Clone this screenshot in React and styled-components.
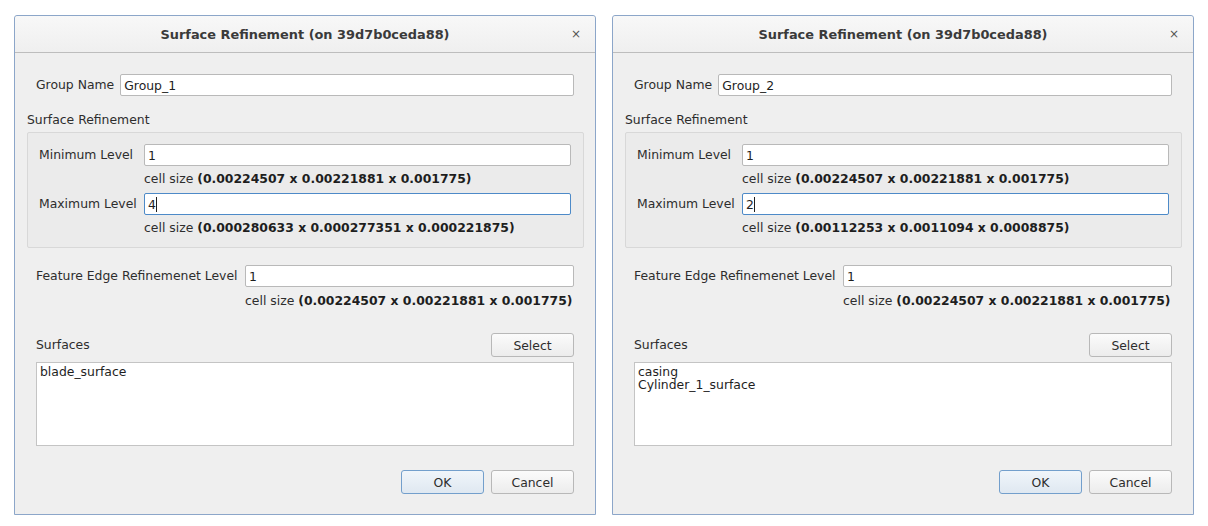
import React from 'react'
import styled, { createGlobalStyle } from 'styled-components'

const GlobalStyle = createGlobalStyle`
  html, body {
    margin: 0;
    padding: 0;
    background: #ffffff;
  }
  body {
    font-family: "DejaVu Sans", "Liberation Sans", sans-serif;
    font-size: 12.4px;
    color: #2d2d2d;
  }
`

const Page = styled.div`
  display: flex;
  gap: 16px;
  padding: 15px 0 0 14px;
`

const Dialog = styled.div`
  box-sizing: border-box;
  width: 582px;
  height: 500px;
  border: 1px solid #8ca6c9;
  border-radius: 3px 3px 0 0;
  background: #efefef;
  display: flex;
  flex-direction: column;
`

const TitleBar = styled.div`
  position: relative;
  height: 36px;
  border-bottom: 1px solid #bdbdbd;
  background: linear-gradient(#f8f8f8, #efefef);
  display: flex;
  align-items: center;
  justify-content: center;
  border-radius: 3px 3px 0 0;
`

const Title = styled.div`
  font-weight: bold;
  font-size: 12.9px;
  color: #3a3a3a;
  margin-top: 1px;
`

const Close = styled.div`
  position: absolute;
  right: 14px;
  top: 11px;
  font-size: 12px;
  color: #555;
`

const Body = styled.div`
  flex: 1;
  display: flex;
  flex-direction: column;
  padding: 21px 11px 0 12px;
`

const Indent = styled.div`
  margin: ${p => p.$top || 0}px 10px 0 9px;
`

const Row = styled.div`
  display: flex;
  align-items: center;
  gap: ${p => p.$gap || 7}px;
`

const FormGrid = styled.div`
  display: grid;
  grid-template-columns: ${p => p.$label}px 1fr;
  align-items: center;
`

const Label = styled.div`
  white-space: nowrap;
  line-height: 16px;
`

const SectionLabel = styled(Label)`
  margin-top: 16px;
`

const Field = styled.div`
  box-sizing: border-box;
  flex: 1;
  height: 22px;
  background: #fff;
  border: 1px solid ${p => (p.$focus ? '#4d8ac8' : '#b9b9b9')};
  border-radius: 2px;
  padding: 0 3px;
  display: flex;
  align-items: center;
  color: #1e1e1e;
`

const Caret = styled.span`
  display: inline-block;
  width: 1px;
  height: 15px;
  background: #1e1e1e;
`

const CellSize = styled.div`
  line-height: 16px;
  white-space: nowrap;
  margin-top: ${p => p.$top || 5}px;
  margin-bottom: ${p => p.$bottom || 0}px;
  b {
    color: #1e1e1e;
  }
`

const GroupBox = styled.div`
  margin-top: 4px;
  border: 1px solid #d8d8d8;
  border-radius: 2px;
  background: #ebebeb;
  padding: 11px 12px 11px 11px;
`

const Button = styled.button`
  box-sizing: border-box;
  width: 83px;
  height: 24px;
  font-family: "DejaVu Sans", "Liberation Sans", sans-serif;
  font-size: 12.4px;
  color: #2d2d2d;
  border: 1px solid ${p => (p.$primary ? '#739fcc' : '#b8b8b8')};
  border-radius: 3px;
  background: ${p =>
    p.$primary
      ? 'linear-gradient(#f0f5fa, #dfe8f1)'
      : 'linear-gradient(#fbfbfb, #ececec)'};
  padding: 0;
`

const SpaceRow = styled.div`
  display: flex;
  align-items: center;
  justify-content: space-between;
`

const List = styled.div`
  box-sizing: border-box;
  margin-top: 5px;
  height: 84px;
  background: #fff;
  border: 1px solid #c4c4c4;
  padding: 2px 3px;
  line-height: 13px;
  color: #1e1e1e;
`

const Actions = styled.div`
  display: flex;
  justify-content: flex-end;
  gap: 7px;
  margin-top: 24px;
`

function Cell({ value, top, bottom }) {
  return (
    <CellSize $top={top} $bottom={bottom}>
      cell size <b>({value})</b>
    </CellSize>
  )
}

function RefinementDialog({ group, maxLevel, minCell, maxCell, surfaces }) {
  return (
    <Dialog>
      <TitleBar>
        <Title>Surface Refinement (on 39d7b0ceda88)</Title>
        <Close>×</Close>
      </TitleBar>
      <Body>
        <Indent>
          <Row $gap={6}>
            <Label>Group Name</Label>
            <Field>{group}</Field>
          </Row>
        </Indent>
        <SectionLabel>Surface Refinement</SectionLabel>
        <GroupBox>
          <FormGrid $label={105}>
            <Label>Minimum Level</Label>
            <Field>1</Field>
            <div />
            <Cell value={minCell} bottom={6} />
            <Label>Maximum Level</Label>
            <Field $focus>
              {maxLevel}
              <Caret />
            </Field>
            <div />
            <Cell value={maxCell} />
          </FormGrid>
        </GroupBox>
        <Indent $top={17}>
          <FormGrid $label={209}>
            <Label>Feature Edge Refinemenet Level</Label>
            <Field>1</Field>
            <div />
            <Cell value="0.00224507 x 0.00221881 x 0.001775" top={6} />
          </FormGrid>
        </Indent>
        <Indent $top={24}>
          <SpaceRow>
            <Label>Surfaces</Label>
            <Button>Select</Button>
          </SpaceRow>
          <List>
            {surfaces.map(s => (
              <div key={s}>{s}</div>
            ))}
          </List>
          <Actions>
            <Button $primary>OK</Button>
            <Button>Cancel</Button>
          </Actions>
        </Indent>
      </Body>
    </Dialog>
  )
}

export default function App() {
  return (
    <>
      <GlobalStyle />
      <Page>
        <RefinementDialog
          group="Group_1"
          maxLevel="4"
          minCell="0.00224507 x 0.00221881 x 0.001775"
          maxCell="0.000280633 x 0.000277351 x 0.000221875"
          surfaces={['blade_surface']}
        />
        <RefinementDialog
          group="Group_2"
          maxLevel="2"
          minCell="0.00224507 x 0.00221881 x 0.001775"
          maxCell="0.00112253 x 0.0011094 x 0.0008875"
          surfaces={['casing', 'Cylinder_1_surface']}
        />
      </Page>
    </>
  )
}
